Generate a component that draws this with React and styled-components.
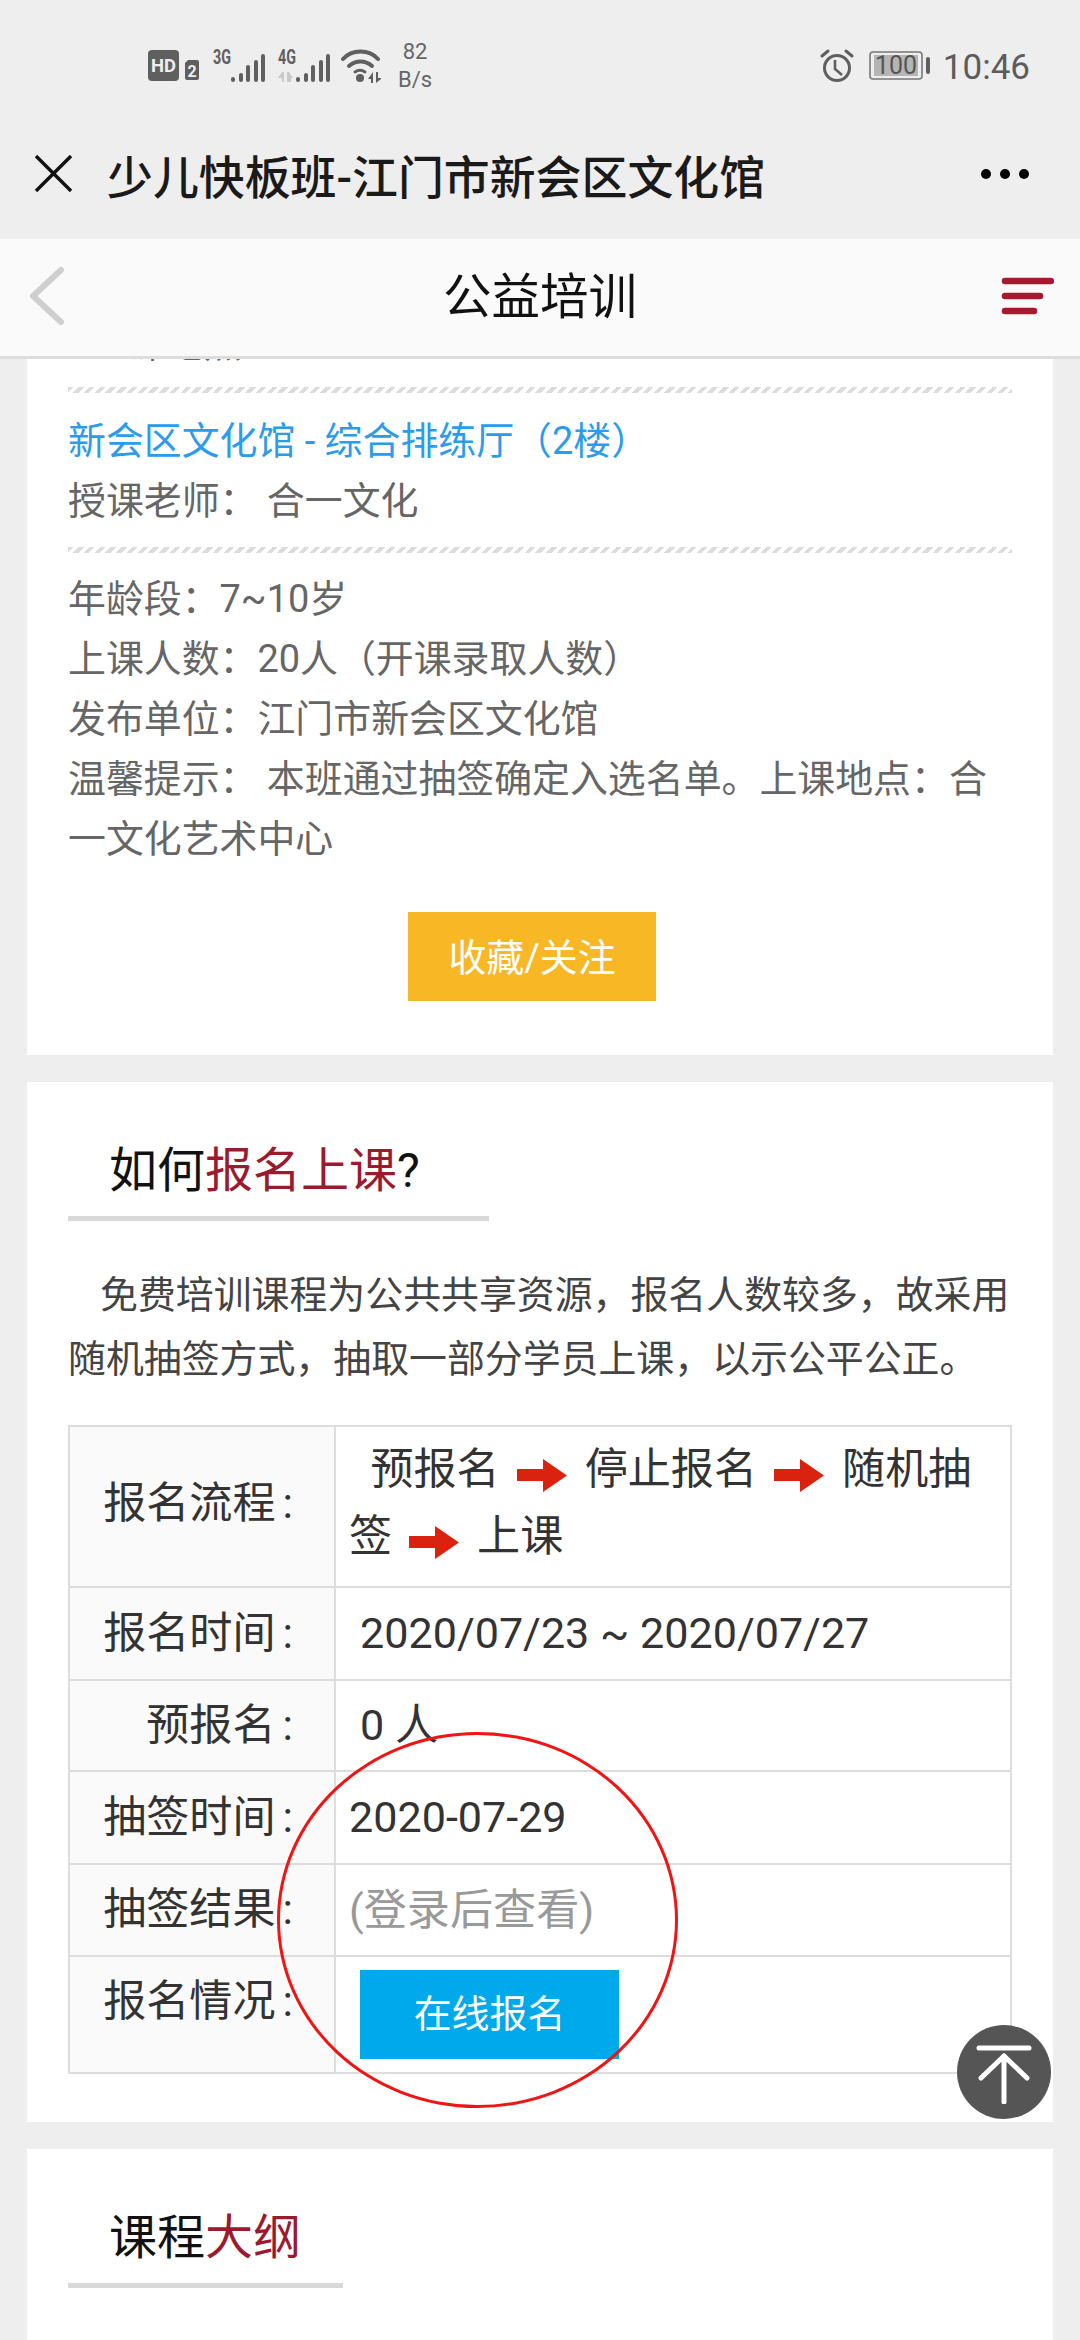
import React from "react";
import styled, { createGlobalStyle } from "styled-components";

const GlobalStyle = createGlobalStyle`
  html, body {
    margin: 0;
    padding: 0;
    background: #eeeeee;
  }
  body {
    font-family: Roboto, "Noto Sans CJK SC", sans-serif;
  }
  * {
    box-sizing: border-box;
  }
`;

const Screen = styled.div`
  position: relative;
  width: 1080px;
  height: 2340px;
  overflow: hidden;
  display: flex;
  flex-direction: column;
  background: #eeeeee;
`;

const StatusBar = styled.div`
  height: 132px;
  display: flex;
  align-items: center;
  padding: 0 50px 0 148px;
  flex-shrink: 0;
`;

const Glyph = styled.svg`
  display: block;
  flex-shrink: 0;
  margin-left: ${(p) => p.$left || 0}px;
`;

const Speed = styled.div`
  width: 42px;
  margin-left: 13px;
  font-size: 22px;
  line-height: 28px;
  text-align: center;
  color: #666;
`;

const Clock = styled.span`
  font-size: 35px;
  margin: 2px 0 0 12px;
  color: #5c5c5c;
`;

const StatusRight = styled.div`
  display: flex;
  align-items: center;
  margin-left: auto;
`;

const TitleBar = styled.div`
  height: 107px;
  display: flex;
  align-items: center;
  padding: 0 51px 24px 35px;
  flex-shrink: 0;
`;

const PageTitle = styled.div`
  font-size: 45.9px;
  font-weight: 500;
  color: #1a1a1a;
  margin-left: 35px;
`;

const MoreDots = styled.div`
  margin-left: auto;
  display: flex;
  gap: 9px;
`;

const Dot = styled.i`
  display: block;
  width: 10px;
  height: 10px;
  border-radius: 50%;
  background: #000;
`;

const Header = styled.header`
  height: 120px;
  flex-shrink: 0;
  display: flex;
  align-items: center;
  justify-content: space-between;
  padding: 0 26px 3px 26px;
  background: #fafafa;
  border-bottom: 3px solid #dddddd;
`;

const HeaderTitle = styled.h1`
  margin: 0 0 6px;
  font-size: 48.5px;
  font-weight: 400;
  color: #111;
`;

const Card = styled.section`
  background: #fff;
  margin: 0 27px 27px;
  padding: ${(p) => p.$top || 0}px 41px ${(p) => p.$bottom || 0}px;
  flex-shrink: 0;
  ${(p) => p.$fill && "flex: 1; margin-bottom: 0;"}
`;

const PeekLine = styled.div`
  height: 5px;
  overflow: hidden;
  display: flex;
  align-items: flex-end;
  padding-left: 22px;
  font-size: 37.9px;
  line-height: 37.9px;
  color: #666;
`;

const Dashes = styled.div`
  height: 6px;
  width: 944px;
  margin-top: ${(p) => p.$top}px;
  background: repeating-linear-gradient(
    135deg,
    #dcdcdc 0 3.8px,
    #ffffff 3.8px 7.6px
  );
`;

const InfoLine = styled.div`
  font-size: 37.9px;
  line-height: 60px;
  margin-top: ${(p) => p.$top || 0}px;
  color: ${(p) => p.$color || "#666"};
`;

const FollowButton = styled.div`
  width: 248px;
  height: 89px;
  margin: 43px 0 0 340px;
  padding-bottom: 4px;
  display: flex;
  align-items: center;
  justify-content: center;
  background: #f8b725;
  color: #fff;
  font-size: 37.9px;
`;

const SectionTitle = styled.div`
  width: ${(p) => p.$width}px;
  height: 84px;
  padding-left: 41px;
  font-size: 48px;
  line-height: 68px;
  color: #111;
  border-bottom: 5px solid #d9d9d9;
`;

const Accent = styled.span`
  color: #9a1b2e;
`;

const Intro = styled.p`
  margin: 42px 0 0;
  font-size: 37.9px;
  line-height: 64px;
  color: #444;
  text-indent: 32px;
`;

const InfoTable = styled.table`
  width: 944px;
  margin-top: 34px;
  border-collapse: collapse;
  table-layout: fixed;
  font-size: 43.1px;
  color: #333;
`;

const Row = styled.tr`
  height: ${(p) => p.$height}px;
`;

const Label = styled.td`
  width: 266px;
  padding: ${(p) => (p.$top ? "16px" : "0")} 41px ${(p) => p.$lift || 0}px 0;
  border: 2px solid #dddddd;
  background: #fafafa;
  text-align: right;
  vertical-align: ${(p) => (p.$top ? "top" : "middle")};
  line-height: 58px;
`;

const Colon = styled.span`
  margin-left: 7px;
`;

const Value = styled.td`
  padding: 0 0 ${(p) => p.$lift || 0}px ${(p) => p.$pad || 13}px;
  border: 2px solid #dddddd;
  line-height: 67px;
  color: ${(p) => p.$color || "#333"};
`;

const FlowArrow = styled.svg`
  width: 50px;
  height: 33px;
  margin: 0 18px 0 17px;
  vertical-align: -8px;
`;

const SignUp = styled.div`
  width: 259px;
  height: 89px;
  display: flex;
  align-items: center;
  justify-content: center;
  background: #00a9ec;
  color: #fff;
  font-size: 37.9px;
`;

const RedCircle = styled.div`
  position: absolute;
  left: 277px;
  top: 1732px;
  width: 401px;
  height: 376px;
  border: 3px solid #f01414;
  border-radius: 50%;
`;

const BackToTop = styled.div`
  position: absolute;
  left: 957px;
  top: 2025px;
  width: 94px;
  height: 94px;
  border-radius: 50%;
  background: #555555;
  display: flex;
  align-items: center;
  justify-content: center;
`;

const HDIcon = () => (
  <Glyph width="52" height="32" viewBox="0 0 52 32">
    <rect x="0" y="0" width="31" height="31" rx="4" fill="#5f5f5f" />
    <text x="15.5" y="22" fontSize="19" fontWeight="700" fill="#eee" textAnchor="middle" fontFamily="Roboto" textLength="25" lengthAdjust="spacingAndGlyphs">HD</text>
    <path d="M37 13l3-3h9a2 2 0 0 1 2 2v16a2 2 0 0 1-2 2H39a2 2 0 0 1-2-2z" fill="#5f5f5f" />
    <text x="44" y="27" fontSize="16" fontWeight="700" fill="#eee" textAnchor="middle" fontFamily="Roboto">2</text>
  </Glyph>
);

const SignalIcon = ({ label, extra, left }) => (
  <Glyph $left={left} width="54" height="46" viewBox="0 -6 54 46">
    <text x="0" y="15" fontSize="20" fontWeight="700" fill="#5f5f5f" fontFamily="Roboto" textLength="18" lengthAdjust="spacingAndGlyphs">{label}</text>
    {extra && <path d="M0 29l4-6h2v10H4v-4zM9 23h2l4 6h-2v4h-4z" fill="#c9c9c9" />}
    <g stroke="#5f5f5f" strokeWidth="4" strokeLinecap="round">
      <path d="M20 31v-1" />
      <path d="M28 31v-5" />
      <path d="M35 31v-13" />
      <path d="M43 31v-18" />
      <path d="M50 31v-24" />
    </g>
  </Glyph>
);

const WifiIcon = () => (
  <Glyph $left={9} width="40" height="34" viewBox="0 0 40 34">
    <g fill="none" stroke="#5f5f5f" strokeLinecap="round">
      <path d="M2 10C11 0 28 0 37 10" strokeWidth="4" />
      <path d="M8 17c7-6 16-6 23 0" strokeWidth="4" />
      <path d="M14 23c3-2 7-2 10 0" strokeWidth="3" />
    </g>
    <circle cx="19" cy="29" r="4" fill="#5f5f5f" />
    <path d="M27 30l5-7v11h-2v-4zM35 23v11l5-4v-1h-3v-6z" fill="#5f5f5f" />
  </Glyph>
);

const AlarmIcon = () => (
  <Glyph width="34" height="34" viewBox="0 0 34 34">
    <circle cx="17" cy="19" r="12.5" fill="none" stroke="#5f5f5f" strokeWidth="3" />
    <path d="M15 11v9l7 6" fill="none" stroke="#5f5f5f" strokeWidth="2.6" />
    <path d="M2 7l6-5M32 7l-6-5" stroke="#5f5f5f" strokeWidth="3" strokeLinecap="round" />
  </Glyph>
);

const BatteryIcon = () => (
  <Glyph $left={15} width="62" height="30" viewBox="0 0 62 30">
    <rect x="1" y="1" width="52" height="27" rx="3" fill="none" stroke="#777" strokeWidth="1.6" />
    <rect x="5" y="4" width="44" height="21" fill="#b5b5b5" />
    <text x="27" y="23" fontSize="25" fill="#555" textAnchor="middle" fontFamily="Roboto" textLength="42" lengthAdjust="spacingAndGlyphs">100</text>
    <rect x="57" y="6" width="4" height="17" rx="2" fill="#5f5f5f" />
  </Glyph>
);

const CloseIcon = () => (
  <Glyph width="37" height="37" viewBox="0 0 37 37">
    <path d="M1 1l35 35M36 1L1 36" stroke="#111" strokeWidth="3.4" />
  </Glyph>
);

const BackIcon = () => (
  <Glyph $left={2} width="54" height="60" viewBox="0 0 54 60">
    <path d="M33 4L5 30l28 26" fill="none" stroke="#cfcfcf" strokeWidth="6" strokeLinecap="round" strokeLinejoin="round" />
  </Glyph>
);

const MenuIcon = () => (
  <Glyph width="56" height="38" viewBox="0 0 56 38">
    <g stroke="#a6192e" strokeWidth="6.5" strokeLinecap="round">
      <path d="M7 4h46" />
      <path d="M7 19h35" />
      <path d="M7 34h29" />
    </g>
  </Glyph>
);

const ArrowShape = () => (
  <FlowArrow viewBox="0 0 50 33">
    <path d="M0 10h26V0l24 16.5L26 33V22H0z" fill="#d9230f" />
  </FlowArrow>
);

const App = () => (
  <Screen>
    <GlobalStyle />
    <StatusBar>
      <HDIcon />
      <SignalIcon label="3G" left={13} />
      <SignalIcon label="4G" left={11} extra />
      <WifiIcon />
      <Speed>82<br />B/s</Speed>
      <StatusRight>
        <AlarmIcon />
        <BatteryIcon />
        <Clock>10:46</Clock>
      </StatusRight>
    </StatusBar>
    <TitleBar>
      <CloseIcon />
      <PageTitle>少儿快板班-江门市新会区文化馆</PageTitle>
      <MoreDots>
        <Dot />
        <Dot />
        <Dot />
      </MoreDots>
    </TitleBar>
    <Header>
      <BackIcon />
      <HeaderTitle>公益培训</HeaderTitle>
      <MenuIcon />
    </Header>
    <Card $bottom={54}>
      <PeekLine>上课地点</PeekLine>
      <Dashes $top={23} />
      <InfoLine $color="#2b9ceb" $top={18}>新会区文化馆 - 综合排练厅（2楼）</InfoLine>
      <InfoLine>授课老师：&nbsp;合一文化</InfoLine>
      <Dashes $top={16} />
      <InfoLine $top={16}>年龄段：7~10岁</InfoLine>
      <InfoLine>上课人数：20人（开课录取人数）</InfoLine>
      <InfoLine>发布单位：江门市新会区文化馆</InfoLine>
      <InfoLine>温馨提示：&nbsp;本班通过抽签确定入选名单。上课地点：合<br />一文化艺术中心</InfoLine>
      <FollowButton>收藏/关注</FollowButton>
    </Card>
    <Card $top={55} $bottom={48}>
      <SectionTitle $width={421}>如何<Accent>报名上课</Accent>?</SectionTitle>
      <Intro>免费培训课程为公共共享资源，报名人数较多，故采用<br />随机抽签方式，抽取一部分学员上课，以示公平公正。</Intro>
      <InfoTable>
        <tbody>
          <Row $height={161}>
            <Label $lift={6}>报名流程<Colon>:</Colon></Label>
            <Value $lift={7}>
              &nbsp;&nbsp;预报名<ArrowShape />停止报名<ArrowShape />随机抽<br />签<ArrowShape />上课
            </Value>
          </Row>
          <Row $height={93}>
            <Label>报名时间<Colon>:</Colon></Label>
            <Value $pad={24}>2020/07/23 ~ 2020/07/27</Value>
          </Row>
          <Row $height={91}>
            <Label>预报名<Colon>:</Colon></Label>
            <Value $pad={24}>0 人</Value>
          </Row>
          <Row $height={93}>
            <Label>抽签时间<Colon>:</Colon></Label>
            <Value>2020-07-29</Value>
          </Row>
          <Row $height={92}>
            <Label>抽签结果<Colon>:</Colon></Label>
            <Value $color="#999">(登录后查看)</Value>
          </Row>
          <Row $height={117}>
            <Label $top>报名情况<Colon>:</Colon></Label>
            <Value $pad={24}>
              <SignUp>在线报名</SignUp>
            </Value>
          </Row>
        </tbody>
      </InfoTable>
    </Card>
    <Card $top={55} $fill>
      <SectionTitle $width={275}>课程<Accent>大纲</Accent></SectionTitle>
    </Card>
    <RedCircle />
    <BackToTop>
      <svg width="56" height="64" viewBox="0 0 56 64">
        <g fill="none" stroke="#fff" strokeWidth="5" strokeLinecap="round" strokeLinejoin="round">
          <path d="M3 8h50" />
          <path d="M28 16v46" />
          <path d="M5 38l23-22 23 22" />
        </g>
      </svg>
    </BackToTop>
  </Screen>
);

export default App;
